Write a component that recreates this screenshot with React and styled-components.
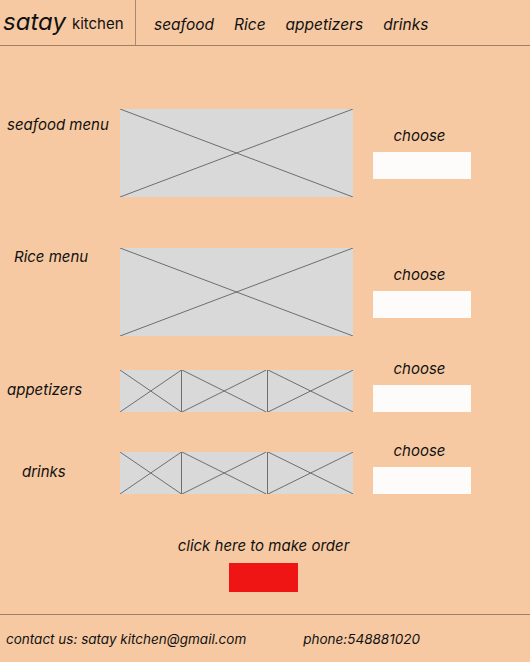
import styled, { createGlobalStyle } from 'styled-components'

const GlobalStyle = createGlobalStyle`
  html, body { margin: 0; padding: 0; }
  body {
    background: #F6C9A2;
    font-family: Inter, "Liberation Sans", sans-serif;
    color: #111;
  }
`

const rows = [
  { label: 'seafood menu', indent: 7, place: 'top', pad: 7, tiles: [1], height: 88, top: 63, align: 'center' },
  { label: 'Rice menu', indent: 14, place: 'top', pad: 0, tiles: [1], height: 88, top: 51, align: 'center' },
  { label: 'appetizers', indent: 7, place: 'middle', pad: 7, tiles: [62, 85, 86], height: 42, top: 24, align: 'end' },
  { label: 'drinks', indent: 22, place: 'middle', pad: 7, tiles: [62, 85, 86], height: 42, top: 30, align: 'end' },
]

function Placeholder({ tiles, height }) {
  return (
    <Picture $h={height}>
      {tiles.map((w, i) => (
        <Tile key={i} $grow={w}>
          <svg width="100%" height="100%" preserveAspectRatio="none" viewBox="0 0 100 100">
            <line x1="0" y1="0" x2="100" y2="100" stroke="#6e6e6e" strokeWidth="1" vectorEffect="non-scaling-stroke" />
            <line x1="100" y1="0" x2="0" y2="100" stroke="#6e6e6e" strokeWidth="1" vectorEffect="non-scaling-stroke" />
          </svg>
        </Tile>
      ))}
    </Picture>
  )
}

export default function App() {
  return (
    <Page>
      <GlobalStyle />
      <Header>
        <Brand>
          <Logo>satay</Logo>
          <Sub>kitchen</Sub>
        </Brand>
        <Nav>
          <NavItem>seafood</NavItem>
          <NavItem>Rice</NavItem>
          <NavItem>appetizers</NavItem>
          <NavItem>drinks</NavItem>
        </Nav>
      </Header>

      <Main>
        {rows.map((r) => (
          <Row key={r.label} $top={r.top} $align={r.align}>
            <Label $indent={r.indent} $place={r.place} $pad={r.pad}>{r.label}</Label>
            <Placeholder tiles={r.tiles} height={r.height} />
            <Choose>
              <ChooseText>choose</ChooseText>
              <Field />
            </Choose>
          </Row>
        ))}

        <Order>
          <OrderText>click here to make order</OrderText>
          <OrderButton />
        </Order>
      </Main>

      <Footer>
        <FootText>contact us: satay kitchen@gmail.com</FootText>
        <FootText>phone:548881020</FootText>
      </Footer>
    </Page>
  )
}

const Page = styled.div`
  width: 530px;
  min-height: 662px;
  display: flex;
  flex-direction: column;
`

const Header = styled.header`
  height: 45px;
  display: flex;
  align-items: stretch;
  border-bottom: 1px solid #9c7f67;
`

const Brand = styled.div`
  width: 132px;
  padding-left: 3px;
  display: flex;
  align-items: center;
  gap: 6px;
  border-right: 1px solid #a88a70;
`

const Logo = styled.span`
  font-size: 24px;
  font-style: italic;
  margin-top: -2px;
`

const Sub = styled.span`
  font-size: 15px;
  margin-top: 1px;
`

const Nav = styled.nav`
  display: flex;
  align-items: center;
  gap: 20px;
  padding-left: 18px;
  padding-top: 3px;
`

const NavItem = styled.span`
  font-size: 15.5px;
  font-style: italic;
`

const Main = styled.main`
  flex: 1;
  display: flex;
  flex-direction: column;
`

const Row = styled.section`
  margin-top: ${(p) => p.$top}px;
  display: grid;
  grid-template-columns: 120px 233px 1fr;
  align-items: ${(p) => p.$align};
`

const Label = styled.div`
  font-size: 15px;
  font-style: italic;
  line-height: 18px;
  padding-left: ${(p) => p.$indent}px;
  padding-top: ${(p) => p.$pad}px;
  align-self: ${(p) => (p.$place === 'top' ? 'start' : 'center')};
`

const Picture = styled.div`
  height: ${(p) => p.$h}px;
  background: #D9D9D9;
  display: flex;
`

const Tile = styled.div`
  flex: ${(p) => p.$grow} 1 0;
  & + & { border-left: 1px solid #6e6e6e; }
  svg { display: block; }
`

const Choose = styled.div`
  padding-left: 20px;
  width: 98px;
  display: flex;
  flex-direction: column;
  align-items: center;
  gap: 7px;
`

const ChooseText = styled.span`
  font-size: 15px;
  font-style: italic;
  line-height: 18px;
  margin-right: 5px;
`

const Field = styled.div`
  width: 98px;
  height: 27px;
  background: #FDFCFB;
`

const Order = styled.div`
  margin-top: 43px;
  display: flex;
  flex-direction: column;
  align-items: center;
  gap: 8px;
  padding-right: 3px;
`

const OrderText = styled.span`
  font-size: 15px;
  font-style: italic;
  line-height: 18px;
`

const OrderButton = styled.button`
  width: 69px;
  height: 29px;
  border: none;
  background: #F01515;
`

const Footer = styled.footer`
  margin-top: 20px;
  height: 47px;
  border-top: 1px solid #9c7f67;
  display: flex;
  align-items: center;
  padding-left: 6px;
  gap: 57px;
`

const FootText = styled.span`
  font-size: 13.5px;
  font-style: italic;
`
